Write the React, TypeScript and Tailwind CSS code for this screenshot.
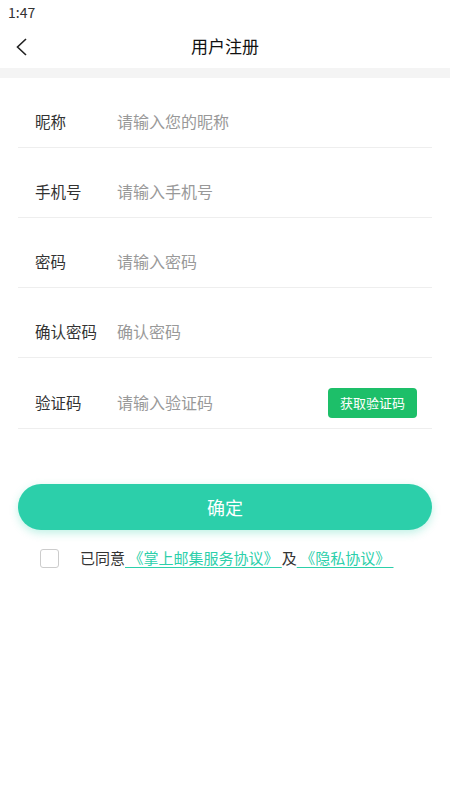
const font = { fontFamily: '"Noto Sans CJK SC", "Noto Sans", sans-serif' };

const fields = [
  { label: '昵称', placeholder: '请输入您的昵称' },
  { label: '手机号', placeholder: '请输入手机号' },
  { label: '密码', placeholder: '请输入密码' },
  { label: '确认密码', placeholder: '确认密码' },
];

const App: React.FC = () => {
  return (
    <div className="w-[450px] h-[800px] bg-white text-[#333]" style={font}>
      <div className="h-[25px] flex items-center pl-[8px] text-[14px] text-[#333]">1:47</div>
      <div className="relative h-[43px] flex items-center justify-center">
        <svg className="absolute left-[14px] top-[12px]" width="16" height="20" viewBox="0 0 16 20">
          <path d="M12 2 L3.5 10 L12 18" fill="none" stroke="#222" strokeWidth="1.6" />
        </svg>
        <span className="text-[17px] text-[#111] mt-[-1px]">用户注册</span>
      </div>
      <div className="h-[10px] bg-[#f4f4f4]" />

      <div className="px-[18px]">
        {fields.map((f) => (
          <div key={f.label} className="h-[70px] flex items-start pt-[33px] border-b border-[#eeeeee]">
            <span className="w-[99px] pl-[17px] text-[15.5px] leading-[20px] text-[#333] whitespace-nowrap">{f.label}</span>
            <span className="text-[16px] leading-[20px] text-[#999]">{f.placeholder}</span>
          </div>
        ))}
        <div className="h-[71px] flex items-center border-b border-[#eeeeee]">
          <span className="w-[99px] pl-[17px] text-[15.5px] leading-[20px] text-[#333] pt-[18px]">验证码</span>
          <span className="flex-1 text-[16px] leading-[20px] text-[#999] pt-[18px]">请输入验证码</span>
          <button className="mt-[20px] mr-[15px] w-[89px] h-[30px] rounded-[4px] bg-[#1dbf69] text-white text-[13px]">
            获取验证码
          </button>
        </div>
      </div>

      <div className="px-[18px] mt-[55px]">
        <button className="w-full h-[46px] rounded-full bg-[#2ccfaa] text-white text-[18px] leading-[44px] shadow-[0_3px_8px_rgba(44,207,170,0.3)]">
          确定
        </button>
      </div>

      <div className="flex items-center mt-[18px] pl-[40px]">
        <span className="w-[19px] h-[19px] rounded-[3px] border border-[#cccccc] bg-white" />
        <span className="ml-[21px] text-[15px] leading-[20px] text-[#333] whitespace-nowrap">
          已同意
          <span className="text-[#2ccfaa] underline underline-offset-[3px]">&nbsp;《掌上邮集服务协议》&nbsp;</span>
          及
          <span className="text-[#2ccfaa] underline underline-offset-[3px]">&nbsp;《隐私协议》&nbsp;</span>
        </span>
      </div>
    </div>
  );
};

export default App;
